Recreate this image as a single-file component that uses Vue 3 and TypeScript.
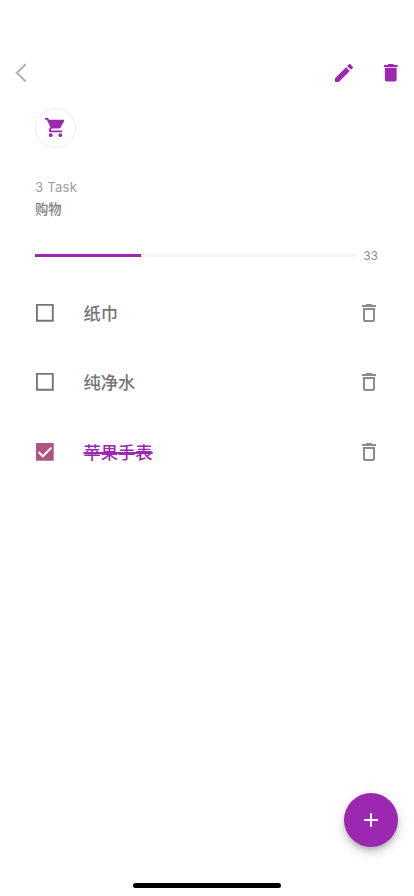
<script setup lang="ts">
import { computed, ref } from 'vue'

interface Task {
  id: number
  name: string
  done: boolean
}

const tasks = ref<Task[]>([
  { id: 1, name: '纸巾', done: false },
  { id: 2, name: '纯净水', done: false },
  { id: 3, name: '苹果手表', done: true },
])

const percent = computed(() =>
  tasks.value.length
    ? Math.floor((tasks.value.filter((t) => t.done).length / tasks.value.length) * 100)
    : 0,
)

function remove(id: number) {
  tasks.value = tasks.value.filter((t) => t.id !== id)
}
</script>

<template>
  <div class="screen">
    <header class="bar">
      <button class="btn back">
        <svg width="12" height="20" viewBox="0 0 12 20"><path d="M10.600 1.200 1.900 9.800l8.700 8.700" fill="none" stroke="#b4b4b4" stroke-width="2.200" /></svg>
      </button>
      <div class="actions">
        <button class="btn">
          <svg width="24" height="24" viewBox="0 0 24 24"><path d="M3 17.25V21h3.75L17.81 9.94l-3.75-3.75L3 17.25zM20.71 7.04a1 1 0 0 0 0-1.41l-2.34-2.34a1 1 0 0 0-1.41 0l-1.83 1.83 3.75 3.75 1.83-1.83z" /></svg>
        </button>
        <button class="btn">
          <svg width="23.500" height="23.500" viewBox="0 0 24 24"><path d="M6 19c0 1.100.9 2 2 2h8c1.100 0 2-.9 2-2V7H6v12zM19 4h-3.500l-1-1h-5l-1 1H5v2h14V4z" /></svg>
        </button>
      </div>
    </header>

    <section class="summary">
      <div class="badge">
        <svg width="24" height="24" viewBox="0 0 24 24"><path d="M7 18c-1.100 0-1.990.9-1.990 2S5.900 22 7 22s2-.9 2-2-.9-2-2-2zM1 2v2h2l3.600 7.590-1.350 2.450c-.16.28-.25.61-.25.96 0 1.100.9 2 2 2h12v-2H7.420c-.14 0-.25-.11-.25-.25l.03-.12.9-1.630h7.450c.75 0 1.410-.41 1.750-1.030l3.580-6.490A1 1 0 0 0 20 4H5.210l-.94-2H1zm16 16c-1.100 0-1.990.9-1.990 2s.89 2 1.990 2 2-.9 2-2-.9-2-2-2z" /></svg>
      </div>
      <div class="count">{{ tasks.length }} Task</div>
      <h1 class="title">购物</h1>
      <div class="progress">
        <div class="track"><div class="fill" :style="{ width: percent + '%' }"></div></div>
        <span class="percent">{{ percent }}</span>
      </div>
    </section>

    <ul class="list">
      <li v-for="task in tasks" :key="task.id" class="row" :class="{ done: task.done }">
        <button class="btn" @click="task.done = !task.done">
          <svg v-if="task.done" width="18" height="18" viewBox="0 0 18 18"><path d="M0 0h17.700v17.700H0z" fill="#ad5483" /><path d="m2.600 9 4.300 4.300 8.500-8.700" fill="none" stroke="#fff" stroke-width="2" /></svg>
          <svg v-else width="18" height="18" viewBox="0 0 18 18"><path d="M.9.900h15.900v15.900H.9z" fill="none" stroke="#757575" stroke-width="1.900" /></svg>
        </button>
        <span class="name">{{ task.name }}</span>
        <button class="btn remove" @click="remove(task.id)">
          <svg width="24" height="24" viewBox="0 0 24 24"><path d="M6 19c0 1.100.9 2 2 2h8c1.100 0 2-.9 2-2V7H6v12zM8 9h8v10H8V9zm7.500-5-1-1h-5l-1 1H5v2h14V4h-3.500z" /></svg>
        </button>
      </li>
    </ul>

    <button class="btn fab">
      <svg width="24" height="24" viewBox="0 0 24 24"><path d="M19 13h-6v6h-2v-6H5v-2h6V5h2v6h6v2z" /></svg>
    </button>
    <div class="home"></div>
  </div>
</template>

<style>
body {
  background: #fff;
}
</style>

<style scoped>
.screen {
  position: relative;
  box-sizing: border-box;
  width: 414px;
  height: 896px;
  padding-top: 48px;
  overflow: hidden;
  background: #fff;
  font-family: Inter, "Noto Sans CJK SC", sans-serif;
}
.btn {
  display: flex;
  padding: 0;
  border: 0;
  background: none;
  cursor: pointer;
}
svg {
  display: block;
  fill: #9c27b0;
}
.bar {
  display: flex;
  align-items: center;
  justify-content: space-between;
  height: 50px;
  padding: 0 12px 0 15px;
}
.actions {
  display: flex;
  align-items: center;
  gap: 22.500px;
}
.summary {
  padding: 9.600px 36px 0 35px;
}
.badge {
  display: flex;
  align-items: center;
  justify-content: center;
  box-sizing: border-box;
  width: 40.600px;
  height: 40.600px;
  border: 1px solid #ececec;
  border-radius: 50%;
}
.badge svg {
  width: 23px;
  height: 23px;
}
.count {
  margin-top: 28.800px;
  font-size: 13.200px;
  line-height: 21px;
  letter-spacing: 0.200px;
  color: #9e9e9e;
}
.title {
  margin: 0;
  font-size: 13.300px;
  font-weight: 500;
  line-height: 22px;
  color: #808080;
}
.progress {
  display: flex;
  align-items: center;
  justify-content: space-between;
  height: 20px;
  margin-top: 25.500px;
}
.track {
  width: 321px;
  height: 3px;
  background: #f5f5f5;
}
.fill {
  height: 3px;
  background: #9c27b0;
}
.percent {
  font-size: 12px;
  color: #8f8f8f;
}
.list {
  margin: 0;
  padding: 12.500px 33px 0 36px;
  list-style: none;
}
.row {
  display: flex;
  align-items: center;
  height: 69.600px;
}
.name {
  flex: 1;
  margin-left: 29.500px;
  padding-top: 1.600px;
  font-size: 17.300px;
  font-weight: 500;
  line-height: 26px;
  color: #757575;
}
.done .name {
  color: #9c27b0;
  text-decoration: line-through;
  text-decoration-thickness: 2px;
}
.remove svg {
  fill: #8c8c8c;
}
.fab {
  position: absolute;
  right: 15.700px;
  bottom: 48.700px;
  align-items: center;
  justify-content: center;
  width: 54.200px;
  height: 54.200px;
  border-radius: 50%;
  background: #9c27b0;
  box-shadow: 0 3px 5px -1px rgba(0, 0, 0, 0.200), 0 6px 10px rgba(0, 0, 0, 0.140), 0 1px 18px rgba(0, 0, 0, 0.060);
}
.fab svg {
  fill: #fff;
}
.home {
  position: absolute;
  bottom: 8px;
  left: 133px;
  width: 148px;
  height: 5px;
  border-radius: 3px;
  background: #000;
}
</style>
